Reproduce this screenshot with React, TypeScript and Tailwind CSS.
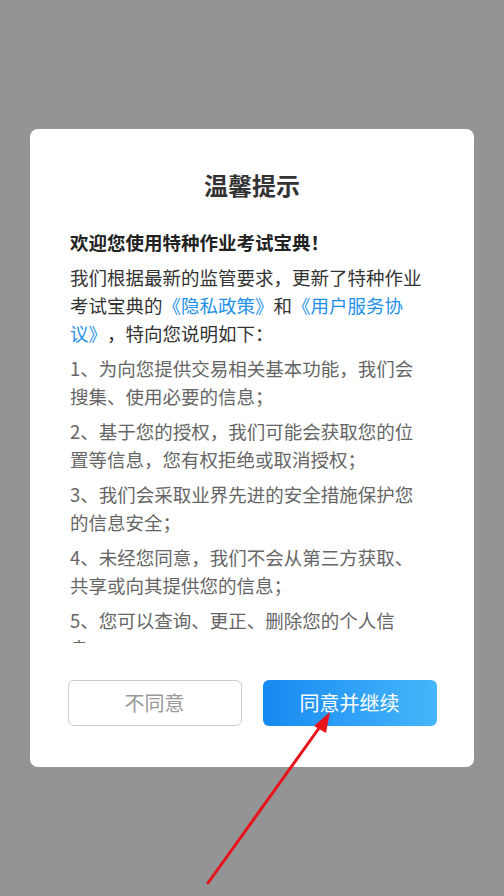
import React from "react";

const cjk = { fontFamily: '"Noto Sans CJK SC", "Noto Sans", sans-serif' };

const items = [
  "1、为向您提供交易相关基本功能，我们会搜集、使用必要的信息；",
  "2、基于您的授权，我们可能会获取您的位置等信息，您有权拒绝或取消授权；",
  "3、我们会采取业界先进的安全措施保护您的信息安全；",
  "4、未经您同意，我们不会从第三方获取、共享或向其提供您的信息；",
  "5、您可以查询、更正、删除您的个人信息；",
];

export default function App() {
  return (
    <div className="relative w-[504px] h-[896px] bg-[#939496] overflow-hidden" style={cjk}>
      <div className="pt-[129px] px-[30px]">
        <div className="bg-white rounded-[8px] pt-[40px] pb-[41px]">
          <h2 className="text-center text-[24px] leading-[32px] font-bold text-[#333333]">温馨提示</h2>

          {/* scrollable policy text */}
          <div className="mt-[27px] h-[415px] overflow-hidden pl-10 pr-[44px] [text-spacing-trim:space-all]">
            <p className="text-[18.5px] leading-[28px] font-bold text-[#222222]">欢迎您使用特种作业考试宝典！</p>
            <p className="mt-[7px] text-[18.5px] leading-[28px] text-[#333333]">
              我们根据最新的监管要求，更新了特种作业考试宝典的
              <span className="text-[#1e90ea]">《隐私政策》</span>和
              <span className="text-[#1e90ea]">《用户服务协议》</span>，特向您说明如下：
            </p>
            {items.map((t) => (
              <p key={t} className="mt-[7px] text-[18.5px] leading-[28px] text-[#666666]">
                {t}
              </p>
            ))}
          </div>

          <div className="mt-[37px] flex justify-center gap-[21px]">
            <button className="w-[174px] h-[46px] rounded-[6px] border border-[#cccccc] text-[20px] text-[#999999] bg-white">
              不同意
            </button>
            <button className="w-[174px] h-[46px] rounded-[6px] text-[20px] text-white bg-gradient-to-r from-[#1589f0] to-[#45b6fa]">
              同意并继续
            </button>
          </div>
        </div>
      </div>

      {/* annotation arrow */}
      <svg className="absolute left-0 top-0 pointer-events-none" width="504" height="896" viewBox="0 0 504 896">
        <line x1="208" y1="883" x2="322" y2="724" stroke="#e8141b" strokeWidth="3" strokeLinecap="round" />
        <polygon points="330,712 314,726 326,733" fill="#e8141b" />
      </svg>
    </div>
  );
}
